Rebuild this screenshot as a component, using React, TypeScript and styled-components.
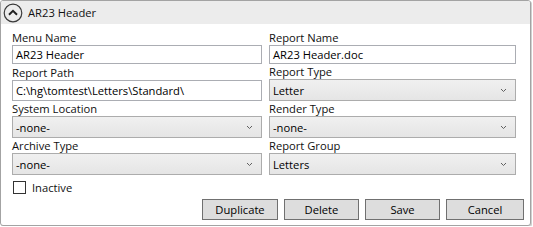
import React from "react";
import styled, { createGlobalStyle } from "styled-components";

const Global = createGlobalStyle`
  html, body { margin: 0; padding: 0; background: #ffffff; }
  body { font-family: "Segoe UI", "Open Sans", "Noto Sans", sans-serif; font-size: 11px; color: #1a1a1a; }
  * { box-sizing: border-box; }
`;

const Panel = styled.div`
  width: 531px;
  height: 226px;
  border: 1px solid #a3a3a3;
  border-radius: 3px;
  box-shadow: 1px 1px 0 #d0d0d0;
  background: #ffffff;
  display: flex;
  flex-direction: column;
  overflow: hidden;
`;

const Header = styled.div`
  height: 23px;
  background: #ececec;
  display: flex;
  align-items: center;
  gap: 5px;
  padding-left: 2px;
  flex: none;
`;

const Title = styled.span`
  font-size: 11.2px;
  line-height: 15px;
  color: #111;
`;

const Body = styled.div`
  flex: 1;
  padding: 6px 6px 5px 11px;
  display: flex;
  flex-direction: column;
`;

const Grid = styled.div`
  display: grid;
  grid-template-columns: 250px 247px;
  column-gap: 7px;
`;

const Field = styled.div`
  display: flex;
  flex-direction: column;
  justify-content: flex-end;
`;

const Label = styled.label`
  display: block;
  height: 15px;
  line-height: 15px;
  font-size: 11.2px;
  color: #111;
  white-space: nowrap;
`;

const TextBox = styled.div<{ $h?: number }>`
  height: ${(p) => p.$h ?? 20}px;
  border: 1px solid #abadb3;
  background: #fff;
  padding: 0 3px;
  display: flex;
  align-items: center;
  font-size: 11.2px;
  color: #000;
  white-space: nowrap;
  overflow: hidden;
`;

const Combo = styled.div`
  height: 22px;
  border: 1px solid #acacac;
  background: linear-gradient(#f0f0f0, #e5e5e5);
  padding: 0 8px 0 3px;
  display: flex;
  align-items: center;
  justify-content: space-between;
  font-size: 11.2px;
  color: #000;
`;

const CheckRow = styled.div`
  display: flex;
  align-items: center;
  gap: 6px;
  margin-top: 6px;
  padding-left: 1px;
  height: 13px;
`;

const CheckBox = styled.span`
  width: 13px;
  height: 13px;
  border: 1px solid #333;
  background: #fff;
  display: inline-block;
`;

const ButtonRow = styled.div`
  display: flex;
  justify-content: flex-end;
  gap: 6px;
  margin-top: 5px;
`;

const Button = styled.button<{ $w?: number }>`
  width: ${(p) => p.$w ?? 76}px;
  height: 21px;
  border: 1px solid #707070;
  background: #dddddd;
  font-family: inherit;
  font-size: 11.2px;
  color: #000;
  padding: 0;
  line-height: 17px;
  border-radius: 0;
`;

const Chevron = () => (
  <svg width="7" height="5" viewBox="0 0 7 5">
    <path d="M1 1 L3.5 3.5 L6 1" fill="none" stroke="#606060" strokeWidth="1" />
  </svg>
);

const CollapseIcon = () => (
  <svg width="20" height="20" viewBox="0 0 20 20">
    <circle cx="10" cy="10" r="8.8" fill="none" stroke="#3a3a3a" strokeWidth="1.2" />
    <path d="M6 11.8 L10 7.8 L14 11.8" fill="none" stroke="#222" strokeWidth="2" />
  </svg>
);

const TextField = ({ label, value, h }: { label: string; value: string; h?: number }) => (
  <Field>
    <Label>{label}</Label>
    <TextBox $h={h}>{value}</TextBox>
  </Field>
);

const ComboField = ({ label, value }: { label: string; value: string }) => (
  <Field>
    <Label>{label}</Label>
    <Combo>
      <span>{value}</span>
      <Chevron />
    </Combo>
  </Field>
);

export default function App() {
  return (
    <>
      <Global />
      <Panel>
        <Header>
          <CollapseIcon />
          <Title>AR23 Header</Title>
        </Header>
        <Body>
          <Grid>
            <TextField label="Menu Name" value="AR23 Header" h={19} />
            <TextField label="Report Name" value="AR23 Header.doc" h={19} />
            <TextField label="Report Path" value="C:\hg\tomtest\Letters\Standard\" h={21} />
            <ComboField label="Report Type" value="Letter" />
            <ComboField label="System Location" value="-none-" />
            <ComboField label="Render Type" value="-none-" />
            <ComboField label="Archive Type" value="-none-" />
            <ComboField label="Report Group" value="Letters" />
          </Grid>
          <CheckRow>
            <CheckBox />
            <Label as="span">Inactive</Label>
          </CheckRow>
          <ButtonRow>
            <Button>Duplicate</Button>
            <Button $w={75}>Delete</Button>
            <Button $w={75}>Save</Button>
            <Button $w={78}>Cancel</Button>
          </ButtonRow>
        </Body>
      </Panel>
    </>
  );
}
